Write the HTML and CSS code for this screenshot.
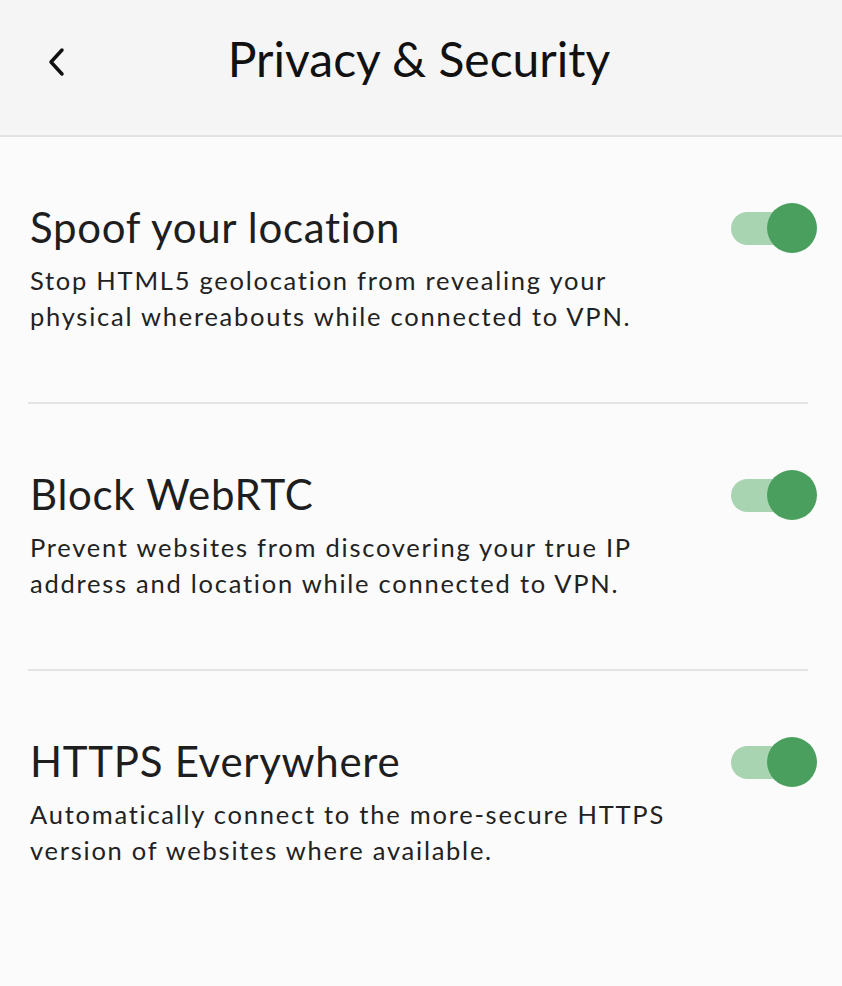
FILE: index.html
```html
<!DOCTYPE html>
<html lang="en">
<head>
    <meta charset="UTF-8">
    <meta name="viewport" content="width=device-width, initial-scale=1.0">
    <title>Privacy &amp; Security</title>
    <link rel="stylesheet" href="styles.css">
</head>
<body>
    <!-- Top bar -->
    <div class="topbar">
        <button class="back" aria-label="Back">
            <svg width="20" height="30" viewBox="0 0 20 30">
                <path d="M15 3 L4 15 L15 27" fill="none" stroke="#111" stroke-width="3.5" stroke-linecap="round" stroke-linejoin="round"/>
            </svg>
        </button>
        <h1>Privacy &amp; Security</h1>
    </div>

    <!-- Settings list -->
    <div class="settings">
        <div class="setting">
            <div class="text">
                <h2>Spoof your location</h2>
                <p>Stop HTML5 geolocation from revealing your<br>physical whereabouts while connected to VPN.</p>
            </div>
            <div class="toggle on"><span class="knob"></span></div>
        </div>
        <div class="divider"></div>

        <div class="setting">
            <div class="text">
                <h2>Block WebRTC</h2>
                <p>Prevent websites from discovering your true IP<br>address and location while connected to VPN.</p>
            </div>
            <div class="toggle on"><span class="knob"></span></div>
        </div>
        <div class="divider"></div>

        <div class="setting">
            <div class="text">
                <h2>HTTPS Everywhere</h2>
                <p>Automatically connect to the more-secure HTTPS<br>version of websites where available.</p>
            </div>
            <div class="toggle on"><span class="knob"></span></div>
        </div>
    </div>
</body>
</html>
```

FILE: styles.css
```css
/* Page */
body {
    margin: 0;
    background-color: #fbfbfb;
    font-family: Lato, "Open Sans", sans-serif;
    color: #1e1e1e;
}

/* Header bar */
.topbar {
    display: flex;
    align-items: center;
    justify-content: center;
    position: relative;
    height: 135px;
    background-color: #f5f5f5;
    border-bottom: 2px solid #e2e2e2;
}

.topbar h1 {
    margin: 0;
    font-size: 48px;
    font-weight: 400;
    color: #111;
    transform: translate(-2px, -9px);
}

.back {
    position: absolute;
    left: 47px;
    top: 47px;
    padding: 0;
    border: none;
    background: none;
}

/* Settings rows */
.settings {
    padding-top: 60px;
}

.setting {
    display: flex;
    align-items: flex-start;
    justify-content: space-between;
    padding: 0 25px 0 30px;
    height: 205px;
}

.text h2 {
    margin: 0;
    font-size: 42px;
    font-weight: 400;
    letter-spacing: 0.7px;
    line-height: 60px;
}

.text p {
    margin: 5px 0 0;
    font-size: 25.5px;
    letter-spacing: 1.75px;
    line-height: 36px;
    color: #222;
}

.divider {
    height: 2px;
    background-color: #e4e4e4;
    margin: 0 34px 60px 28px;
}

/* Toggle switch */
.toggle {
    position: relative;
    flex-shrink: 0;
    width: 86px;
    height: 50px;
    margin-top: 6px;
}

.toggle::before {
    content: "";
    position: absolute;
    left: 0;
    top: 9px;
    width: 70px;
    height: 33px;
    border-radius: 17px;
    background-color: #a9d4b1;
}

.toggle .knob {
    position: absolute;
    right: 0;
    top: 0;
    width: 50px;
    height: 50px;
    border-radius: 50%;
    background-color: #4b9f5e;
}
```
